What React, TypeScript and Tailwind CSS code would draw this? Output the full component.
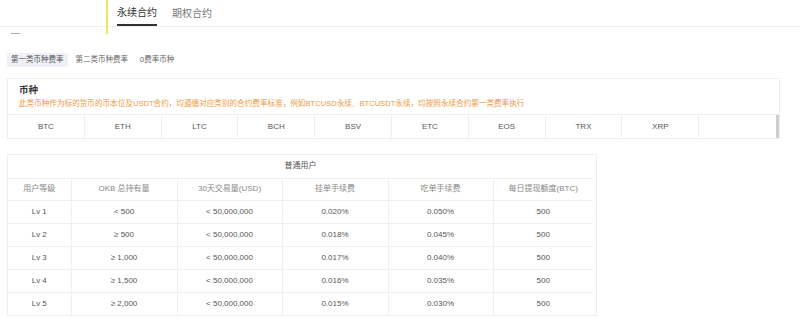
const COINS = ["BTC", "ETH", "LTC", "BCH", "BSV", "ETC", "EOS", "TRX", "XRP", ""];

const HEADERS = ["用户等级", "OKB 总持有量", "30天交易量(USD)", "挂单手续费", "吃单手续费", "每日提现额度(BTC)"];

const ROWS = [
  ["Lv 1", "< 500", "< 50,000,000", "0.020%", "0.050%", "500"],
  ["Lv 2", "≥ 500", "< 50,000,000", "0.018%", "0.045%", "500"],
  ["Lv 3", "≥ 1,000", "< 50,000,000", "0.017%", "0.040%", "500"],
  ["Lv 4", "≥ 1,500", "< 50,000,000", "0.016%", "0.035%", "500"],
  ["Lv 5", "≥ 2,000", "< 50,000,000", "0.015%", "0.030%", "500"],
];

const COL_WIDTHS = ["w-[63px]", "w-[106px]", "w-[105px]", "w-[106px]", "w-[105px]", "w-[100px]"];

export default function App() {
  return (
    <div className="relative w-[800px] h-[322px] overflow-hidden bg-white font-['Liberation_Sans','Noto_Sans_CJK_SC',sans-serif]">
      {/* yellow marker line */}
      <div className="absolute left-[106px] top-0 w-[2px] h-[34px] bg-[#f2e85c]" />

      {/* Tabs */}
      <div className="flex h-[27px] gap-[15px] border-b border-[#eeeeee] pl-[117px]">
        <div className="flex items-center border-b-2 border-[#333] pt-[1px] text-[10px] text-[#333] leading-none">
          永续合约
        </div>
        <div className="flex items-center pt-[1px] text-[10px] text-[#777] leading-none">期权合约</div>
      </div>

      <div className="ml-[11px] mt-[6px] h-px w-[9px] bg-[#aaa]" />

      {/* Sub tabs */}
      <div className="ml-[7px] mt-[19px] flex gap-[4px] text-[7.5px] leading-none">
        <div className="flex h-[14px] items-center rounded-[2px] bg-[#eef0f6] px-[4px] text-[#555]">
          第一类币种费率
        </div>
        <div className="flex h-[14px] items-center px-[4px] text-[#666]">第二类币种费率</div>
        <div className="flex h-[14px] items-center px-[4px] text-[#666]">0费率币种</div>
      </div>

      {/* Coin card */}
      <div className="ml-[7px] mt-[11px] w-[773px] border border-[#eeeeee]">
        <div className="px-[11px] pt-[5px] pb-[5px]">
          <div className="text-[9.5px] font-bold leading-[12px] text-[#333]">币种</div>
          <div className="mt-[3px] text-[7.6px] leading-[10px] text-[#ee9a45] whitespace-nowrap">
            此类币种作为标的货币的币本位及USDT合约，均遵循对应类别的合约费率标准，例如BTCUSD永续、BTCUSDT永续，均按照永续合约第一类费率执行
          </div>
        </div>
        <div className="flex border-t border-[#eeeeee]">
          <div className="grid h-[23px] flex-1 grid-cols-10">
            {COINS.map((c, i) => (
              <div
                key={i}
                className={`flex items-center justify-center text-[8px] text-[#555] ${i < 9 ? "border-r border-[#f0f0f0]" : ""}`}
              >
                {c}
              </div>
            ))}
          </div>
          <div className="w-[3px] bg-[#cfcfcf]" />
        </div>
      </div>

      {/* Fee table */}
      <div className="ml-[7px] mt-[15px] w-[590px] border border-[#eeeeee] pr-[4px]">
        <table className="w-[585px] table-fixed border-collapse text-[8px] text-[#555]">
          <colgroup>
            {COL_WIDTHS.map((w, i) => (
              <col key={i} className={w} />
            ))}
          </colgroup>
          <thead>
            <tr className="h-[23px] border-b border-[#f0f0f0]">
              <th colSpan={6} className="font-normal text-[#555]">
                普通用户
              </th>
            </tr>
            <tr className="h-[22px] border-b border-[#f0f0f0]">
              {HEADERS.map((h, i) => (
                <th
                  key={h}
                  className={`font-normal text-[#888] ${i < 5 ? "border-r border-[#f0f0f0]" : ""}`}
                >
                  {h}
                </th>
              ))}
            </tr>
          </thead>
          <tbody>
            {ROWS.map((row, r) => (
              <tr key={r} className={`h-[23px] ${r < ROWS.length - 1 ? "border-b border-[#f0f0f0]" : ""}`}>
                {row.map((cell, i) => (
                  <td
                    key={i}
                    className={`text-center ${i < 5 ? "border-r border-[#f0f0f0]" : ""}`}
                  >
                    {cell}
                  </td>
                ))}
              </tr>
            ))}
          </tbody>
        </table>
      </div>
    </div>
  );
}
